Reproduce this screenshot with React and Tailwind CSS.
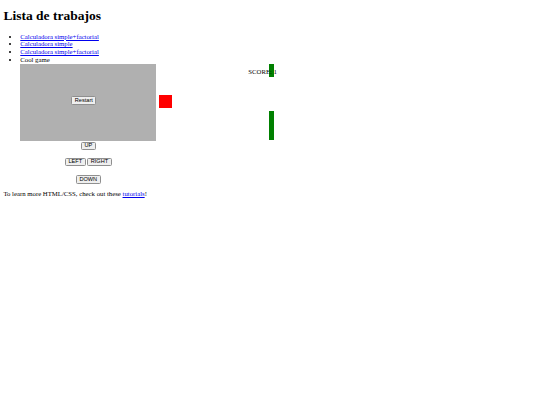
import React, { useState } from 'react';

const Btn = ({ children, onClick }) => (
  <button
    type="button"
    onClick={onClick}
    className="h-[8.5px] px-[2.5px] border-[0.8px] border-[#8f8f8f] rounded-[1.5px] bg-[#efefef] text-black text-[5.6px] leading-none font-['Liberation_Sans',Arial,sans-serif]"
  >
    {children}
  </button>
);

const links = ['Calculadora simple+factorial', 'Calculadora simple', 'Calculadora simple+factorial'];

const App = () => {
  const [score, setScore] = useState(1);

  return (
    <div className="min-h-[405px] bg-white px-[3.4px] pt-[8px] text-black text-[6.75px] leading-[7.76px] font-['Liberation_Serif','Times_New_Roman',serif]">
      <h1 className="text-[13.5px] leading-[15.5px] font-bold">Lista de trabajos</h1>

      <ul className="mt-[9px] mb-[6.75px] pl-[16.9px] list-disc">
        {links.map((label, i) => (
          <li key={i}>
            <a href="#" className="text-[#0000ee] underline">
              {label}
            </a>
          </li>
        ))}
        <li>
          Cool game
          <div className="relative w-[136px]">
            <div className="relative h-[77px] bg-[#b0b0b0]">
              <div className="absolute left-[51px] top-[32px]">
                <Btn onClick={() => setScore(0)}>Restart</Btn>
              </div>
            </div>
            <div className="absolute left-[139px] top-[31.5px] w-[13px] h-[13px] bg-[#ff0000]" />
            <div className="absolute left-[248.5px] top-0 w-[5px] h-[13.5px] bg-[#008000]" />
            <div className="absolute left-[248.5px] top-[47.5px] w-[5px] h-[29px] bg-[#008000]" />
            <div className="absolute left-[228px] top-[4.5px] whitespace-nowrap">SCORE: {score}</div>

            <div className="flex flex-col items-center pt-[1px]">
              <Btn>UP</Btn>
              <div className="flex gap-[1.7px] mt-[7.5px]">
                <Btn>LEFT</Btn>
                <Btn>RIGHT</Btn>
              </div>
              <div className="mt-[8.5px]">
                <Btn>DOWN</Btn>
              </div>
            </div>
          </div>
        </li>
      </ul>

      <p>
        To learn more HTML/CSS, check out these{' '}
        <a href="#" className="text-[#0000ee] underline">
          tutorials
        </a>
        !
      </p>
    </div>
  );
};

export default App;
